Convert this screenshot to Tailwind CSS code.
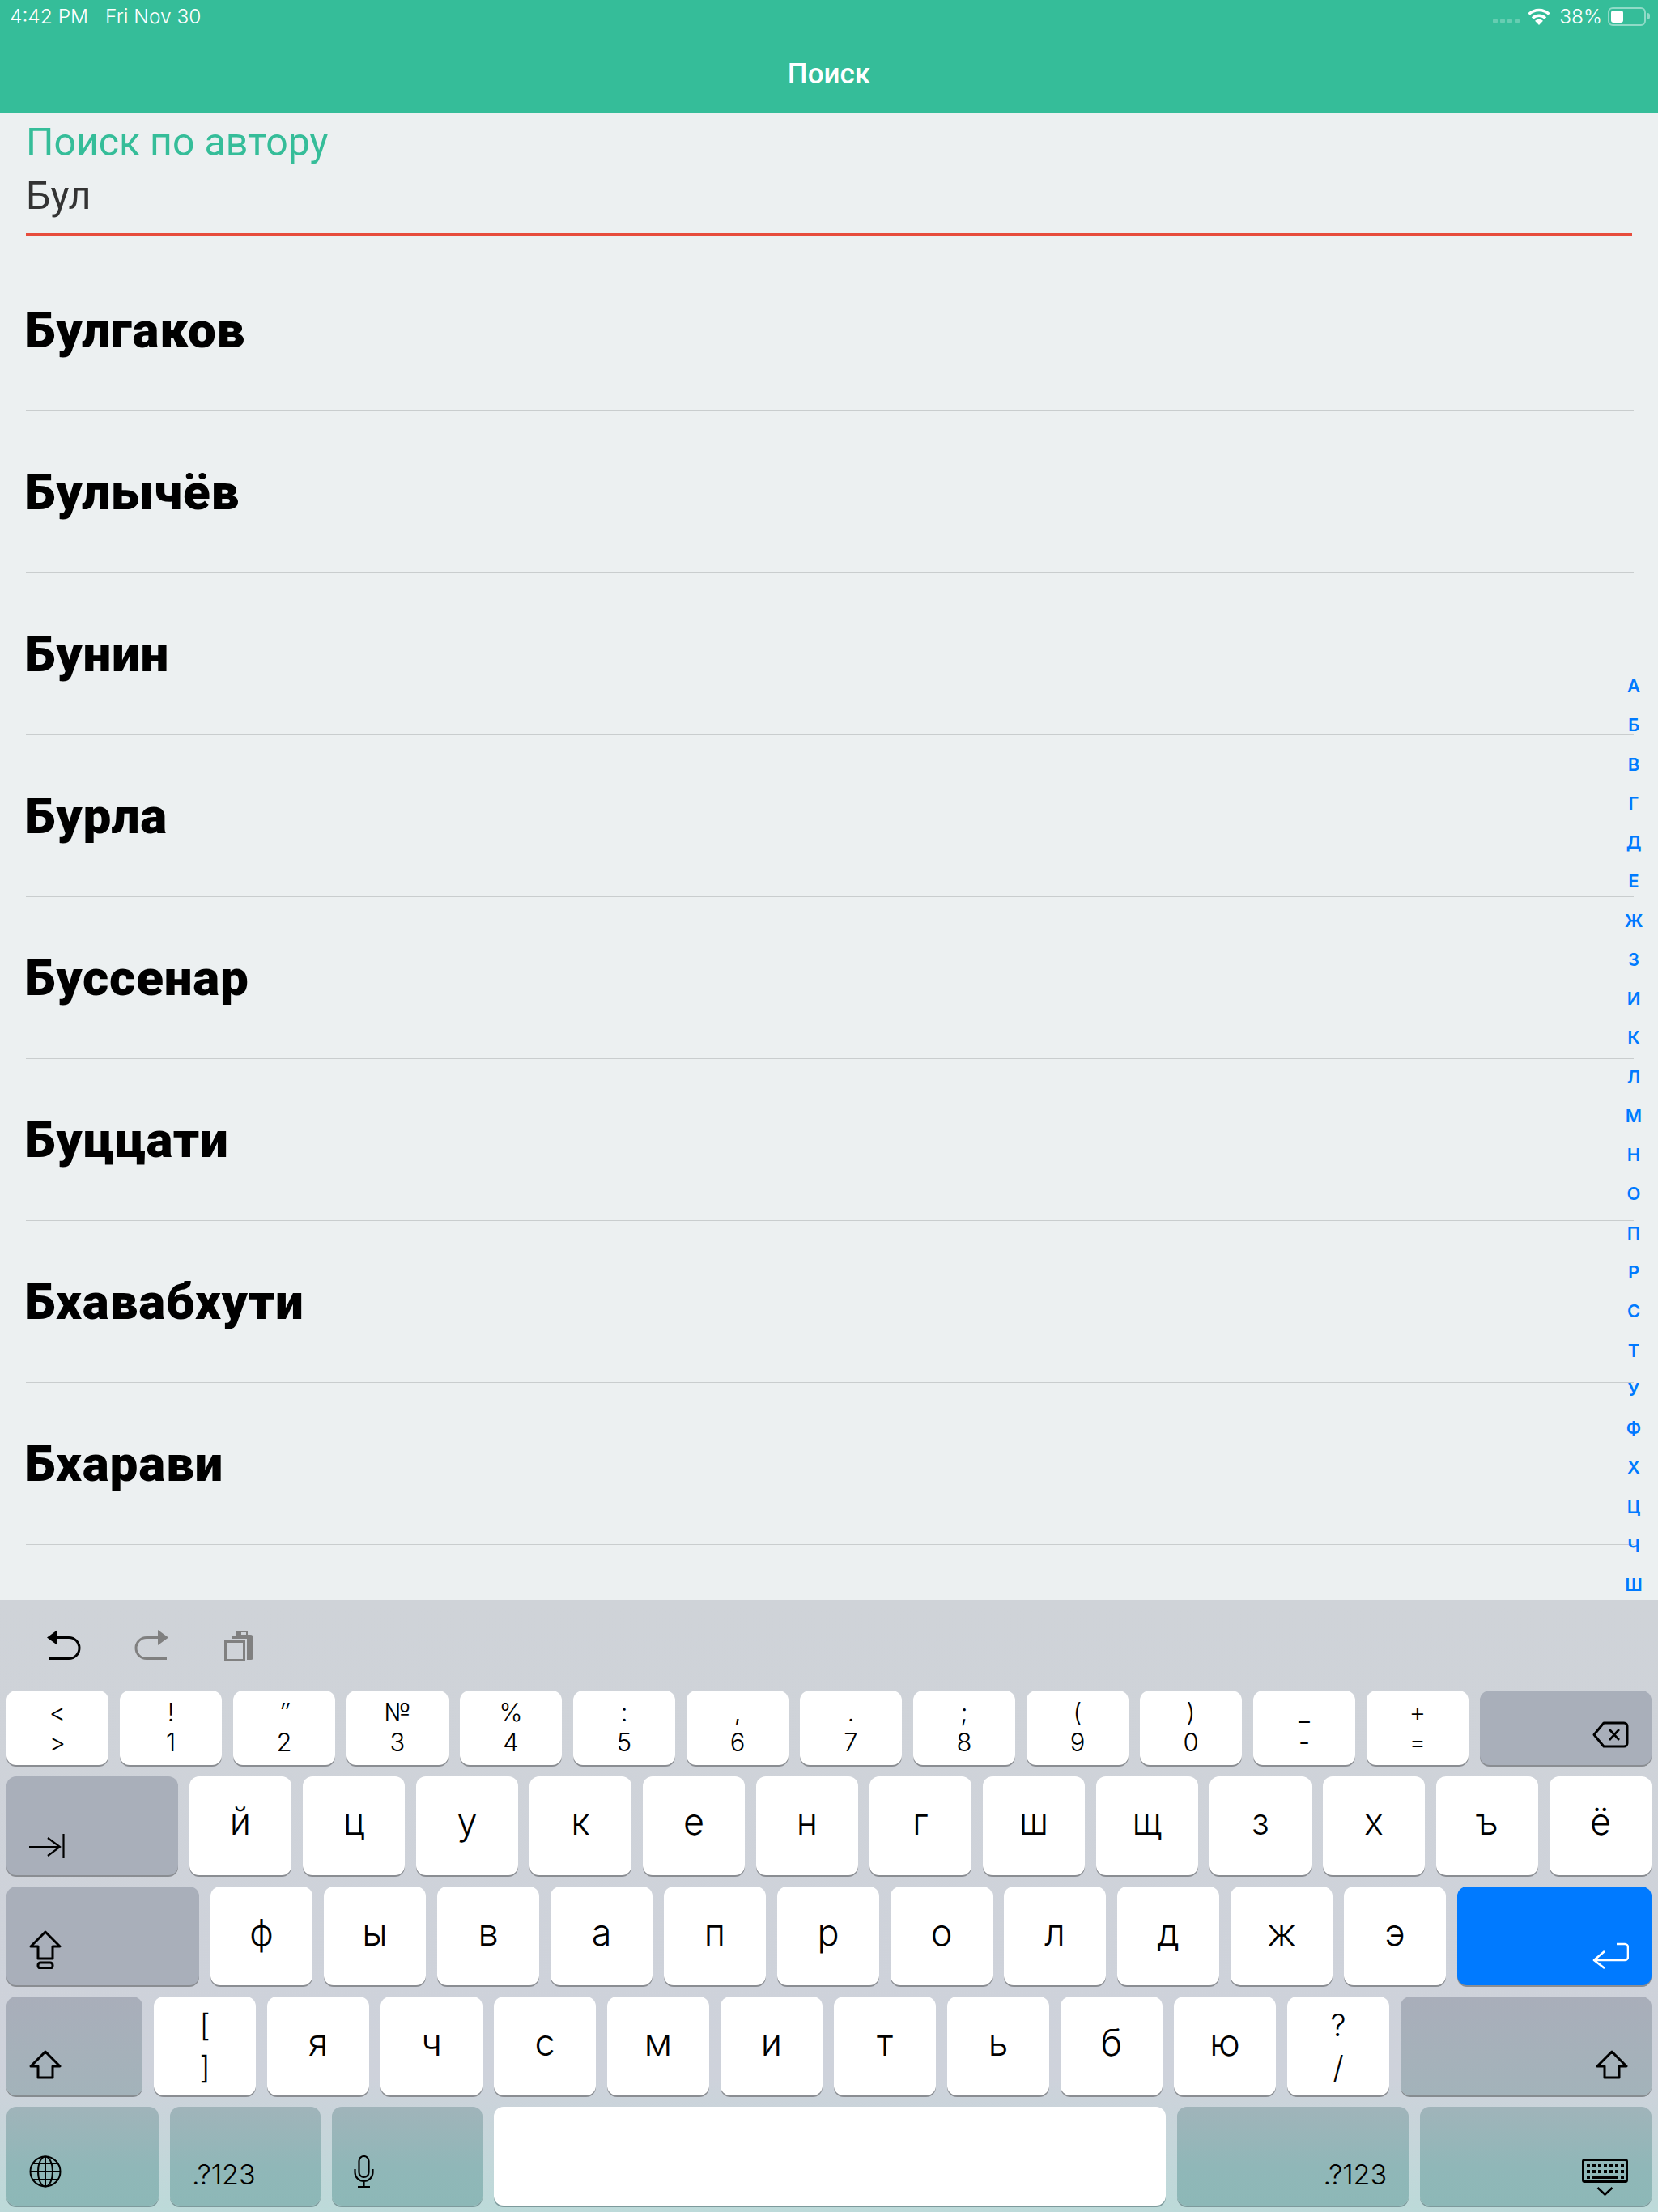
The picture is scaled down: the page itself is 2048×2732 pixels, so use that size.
<!DOCTYPE html>
<html lang="ru">
  <head>
    <meta charset="UTF-8" />
    <title>Поиск</title>
    <script src="https://cdn.jsdelivr.net/npm/@tailwindcss/browser@4"></script>
  </head>
  <body class="font-['Roboto',sans-serif]">
    <div class="relative w-[2048px] h-[2732px] flex flex-col overflow-hidden bg-[#ecf0f1]">
      <!-- Header -->
      <header class="h-[140px] shrink-0 bg-[#35bd99] text-white">
        <div class="h-[40px] pl-3 pr-[10px] flex items-center justify-between text-[24.500px] leading-none">
          <div class="flex gap-[21px] font-['Inter',sans-serif] font-light"><span>4:42 PM</span><span>Fri Nov 30</span></div>
          <div class="flex items-center font-['Inter',sans-serif] font-light">
            <div class="flex gap-[3px] mt-[12px] mr-[10px]">
              <span class="w-[6px] h-[6px] rounded-[2px] bg-white/25"></span>
              <span class="w-[6px] h-[6px] rounded-[2px] bg-white/25"></span>
              <span class="w-[6px] h-[6px] rounded-[2px] bg-white/25"></span>
              <span class="w-[6px] h-[6px] rounded-[2px] bg-white/25"></span>
            </div>
            <svg class="w-[28px] h-[21px]" viewBox="0 0 28 21" fill="none" stroke="white" stroke-width="3.4">
              <path d="M1.5 7.5a18 18 0 0 1 25 0" />
              <path d="M6 12.5a11.5 11.5 0 0 1 16 0" />
              <path d="M14 21l-5-5.2a7 7 0 0 1 10 0z" fill="white" stroke="none" />
            </svg>
            <span class="ml-[11px]">38%</span>
            <div class="ml-[7px] w-[47px] h-[23px] rounded-[6px] border-2 border-white/45 p-[2px]">
              <div class="w-[15px] h-full rounded-[3px] bg-white"></div>
            </div>
            <div class="ml-[2px] w-[3px] h-[8px] rounded-r-sm bg-white/45"></div>
          </div>
        </div>
        <h1 class="mt-[32px] text-center text-[35px] leading-[40px] font-medium">Поиск</h1>
      </header>

      <!-- Search + results -->
      <main class="flex-1 overflow-hidden">
        <div class="ml-8 w-[1984px] border-b-4 border-[#e74c3c] pt-2 h-[152px]">
          <div class="text-[48.250px] leading-[56px] text-[#35bd99]">Поиск по автору</div>
          <div class="mt-[10px] text-[48.500px] leading-[56px] text-[#333333]">Бул</div>
        </div>
        <ul class="mt-4 ml-8 w-[1986px] text-black text-[62px] font-black tracking-[0.8px]">
          <li class="h-[200px] flex items-center border-b border-[#c9cdce]"><span class="-ml-[2px]">Булгаков</span></li>
          <li class="h-[200px] flex items-center border-b border-[#c9cdce]"><span class="-ml-[2px]">Булычёв</span></li>
          <li class="h-[200px] flex items-center border-b border-[#c9cdce]"><span class="-ml-[2px]">Бунин</span></li>
          <li class="h-[200px] flex items-center border-b border-[#c9cdce]"><span class="-ml-[2px]">Бурла</span></li>
          <li class="h-[200px] flex items-center border-b border-[#c9cdce]"><span class="-ml-[2px]">Буссенар</span></li>
          <li class="h-[200px] flex items-center border-b border-[#c9cdce]"><span class="-ml-[2px]">Буццати</span></li>
          <li class="h-[200px] flex items-center border-b border-[#c9cdce]"><span class="-ml-[2px]">Бхавабхути</span></li>
          <li class="h-[200px] flex items-center border-b border-[#c9cdce]"><span class="-ml-[2px]">Бхарави</span></li>
        </ul>
      </main>

      <!-- Alphabet index, lies over the list -->
      <div class="absolute top-[823px] left-[1998px] w-10 flex flex-col items-center text-[22px] leading-[48.26px] font-['Inter',sans-serif] font-semibold text-[#007aff]">
        <span>А</span><span>Б</span><span>В</span><span>Г</span><span>Д</span><span>Е</span><span>Ж</span><span>З</span>
        <span>И</span><span>К</span><span>Л</span><span>М</span><span>Н</span><span>О</span><span>П</span><span>Р</span>
        <span>С</span><span>Т</span><span>У</span><span>Ф</span><span>Х</span><span>Ц</span><span>Ч</span><span>Ш</span>
      </div>

      <!-- Keyboard -->
      <section class="h-[756px] shrink-0 px-2 bg-linear-to-b from-[#cfd3d8] via-[#ced2db] via-78% to-[#bcdad9] font-['Inter',sans-serif] font-light text-black">
        <div class="h-[112px] pl-[50px] flex items-center">
          <svg class="w-[42px] h-[38px]" viewBox="0 0 42 38" fill="none" stroke="black" stroke-width="3">
            <path d="M0 9.5L13 0V19Z" fill="black" stroke="none" />
            <path d="M12 9.5H27a13 13 0 0 1 0 26H2" />
          </svg>
          <svg class="ml-[66px] w-[42px] h-[38px]" viewBox="0 0 42 38" fill="none" stroke="#808080" stroke-width="3">
            <path d="M42 9.5L29 0V19Z" fill="#808080" stroke="none" />
            <path d="M30 9.5H15a13 13 0 0 0 0 26H40" />
          </svg>
          <svg class="ml-[69px] w-[37px] h-[39px]" viewBox="0 0 37 39" fill="none">
            <path d="M9 7h6V1h14v5h3a4 4 0 0 1 4 4v24a3 3 0 0 1-3 3h-5V11H9Z" fill="#808080" />
            <rect x="21" y="3" width="6" height="3" fill="#cfd3d8" />
            <rect x="1.5" y="14.5" width="23" height="23" stroke="#808080" stroke-width="3" />
          </svg>
        </div>

        <div class="flex flex-col gap-[14px]">
          <!-- Row 1 -->
          <div class="h-[92px] flex gap-[14px] text-[31px] leading-[37px] text-center">
            <div class="w-[126px] rounded-[12px] bg-white shadow-[0_2px_0_#8a8d92] pt-[8px]">&lt;<br />&gt;</div>
            <div class="w-[126px] rounded-[12px] bg-white shadow-[0_2px_0_#8a8d92] pt-[8px]">!<br />1</div>
            <div class="w-[126px] rounded-[12px] bg-white shadow-[0_2px_0_#8a8d92] pt-[8px]"><i>″</i><br />2</div>
            <div class="w-[126px] rounded-[12px] bg-white shadow-[0_2px_0_#8a8d92] pt-[8px]">№<br />3</div>
            <div class="w-[126px] rounded-[12px] bg-white shadow-[0_2px_0_#8a8d92] pt-[8px]">%<br />4</div>
            <div class="w-[126px] rounded-[12px] bg-white shadow-[0_2px_0_#8a8d92] pt-[8px]">:<br />5</div>
            <div class="w-[126px] rounded-[12px] bg-white shadow-[0_2px_0_#8a8d92] pt-[8px]">,<br />6</div>
            <div class="w-[126px] rounded-[12px] bg-white shadow-[0_2px_0_#8a8d92] pt-[8px]">.<br />7</div>
            <div class="w-[126px] rounded-[12px] bg-white shadow-[0_2px_0_#8a8d92] pt-[8px]">;<br />8</div>
            <div class="w-[126px] rounded-[12px] bg-white shadow-[0_2px_0_#8a8d92] pt-[8px]">(<br />9</div>
            <div class="w-[126px] rounded-[12px] bg-white shadow-[0_2px_0_#8a8d92] pt-[8px]">)<br />0</div>
            <div class="w-[126px] rounded-[12px] bg-white shadow-[0_2px_0_#8a8d92] pt-[8px]">_<br />-</div>
            <div class="w-[126px] rounded-[12px] bg-white shadow-[0_2px_0_#8a8d92] pt-[8px]">+<br />=</div>
            <div class="w-[212px] rounded-[12px] bg-[#a9afba] shadow-[0_2px_0_#8a8d92] flex items-end justify-end pr-[28px] pb-[21px]">
              <svg class="w-[45px] h-[33px]" viewBox="0 0 45 33" fill="none" stroke="black" stroke-width="3" stroke-linejoin="round">
                <path d="M14 2H39a4 4 0 0 1 4 4V27a4 4 0 0 1-4 4H14L2 16.5Z" />
                <path d="M21 10l12 13M33 10L21 23" stroke-width="2.6" />
              </svg>
            </div>
          </div>
          <!-- Row 2 -->
          <div class="h-[122px] flex gap-[14px] text-[45px]">
            <div class="w-[212px] rounded-[12px] bg-[#a9afba] shadow-[0_2px_0_#8a8d92] flex items-end pl-[28px] pb-[21px]">
              <svg class="w-[44px] h-[30px]" viewBox="0 0 44 30" fill="none" stroke="black" stroke-width="2.2">
                <path d="M0 16H38M23 5l15 11-15 11M42.500 0V30" />
              </svg>
            </div>
            <div class="w-[126px] rounded-[12px] bg-white shadow-[0_2px_0_#8a8d92] flex items-center justify-center pb-[10px]">й</div>
            <div class="w-[126px] rounded-[12px] bg-white shadow-[0_2px_0_#8a8d92] flex items-center justify-center pb-[10px]">ц</div>
            <div class="w-[126px] rounded-[12px] bg-white shadow-[0_2px_0_#8a8d92] flex items-center justify-center pb-[10px]">у</div>
            <div class="w-[126px] rounded-[12px] bg-white shadow-[0_2px_0_#8a8d92] flex items-center justify-center pb-[10px]">к</div>
            <div class="w-[126px] rounded-[12px] bg-white shadow-[0_2px_0_#8a8d92] flex items-center justify-center pb-[10px]">е</div>
            <div class="w-[126px] rounded-[12px] bg-white shadow-[0_2px_0_#8a8d92] flex items-center justify-center pb-[10px]">н</div>
            <div class="w-[126px] rounded-[12px] bg-white shadow-[0_2px_0_#8a8d92] flex items-center justify-center pb-[10px]">г</div>
            <div class="w-[126px] rounded-[12px] bg-white shadow-[0_2px_0_#8a8d92] flex items-center justify-center pb-[10px]">ш</div>
            <div class="w-[126px] rounded-[12px] bg-white shadow-[0_2px_0_#8a8d92] flex items-center justify-center pb-[10px]">щ</div>
            <div class="w-[126px] rounded-[12px] bg-white shadow-[0_2px_0_#8a8d92] flex items-center justify-center pb-[10px]">з</div>
            <div class="w-[126px] rounded-[12px] bg-white shadow-[0_2px_0_#8a8d92] flex items-center justify-center pb-[10px]">х</div>
            <div class="w-[126px] rounded-[12px] bg-white shadow-[0_2px_0_#8a8d92] flex items-center justify-center pb-[10px]">ъ</div>
            <div class="w-[126px] rounded-[12px] bg-white shadow-[0_2px_0_#8a8d92] flex items-center justify-center pb-[10px]">ё</div>
          </div>
          <!-- Row 3 -->
          <div class="h-[122px] flex gap-[14px] text-[45px]">
            <div class="w-[238px] rounded-[12px] bg-[#a9afba] shadow-[0_2px_0_#8a8d92] flex items-end pl-[28px] pb-[20px]">
              <svg class="w-[40px] h-[48px]" viewBox="0 0 40 48" fill="none" stroke="black" stroke-width="3" stroke-linejoin="round">
                <path d="M20 2L38 20H29V35H11V20H2Z" />
                <rect x="11" y="40" width="18" height="7" rx="3" />
              </svg>
            </div>
            <div class="w-[126px] rounded-[12px] bg-white shadow-[0_2px_0_#8a8d92] flex items-center justify-center pb-[8px]">ф</div>
            <div class="w-[126px] rounded-[12px] bg-white shadow-[0_2px_0_#8a8d92] flex items-center justify-center pb-[8px]">ы</div>
            <div class="w-[126px] rounded-[12px] bg-white shadow-[0_2px_0_#8a8d92] flex items-center justify-center pb-[8px]">в</div>
            <div class="w-[126px] rounded-[12px] bg-white shadow-[0_2px_0_#8a8d92] flex items-center justify-center pb-[8px]">а</div>
            <div class="w-[126px] rounded-[12px] bg-white shadow-[0_2px_0_#8a8d92] flex items-center justify-center pb-[8px]">п</div>
            <div class="w-[126px] rounded-[12px] bg-white shadow-[0_2px_0_#8a8d92] flex items-center justify-center pb-[8px]">р</div>
            <div class="w-[126px] rounded-[12px] bg-white shadow-[0_2px_0_#8a8d92] flex items-center justify-center pb-[8px]">о</div>
            <div class="w-[126px] rounded-[12px] bg-white shadow-[0_2px_0_#8a8d92] flex items-center justify-center pb-[8px]">л</div>
            <div class="w-[126px] rounded-[12px] bg-white shadow-[0_2px_0_#8a8d92] flex items-center justify-center pb-[8px]">д</div>
            <div class="w-[126px] rounded-[12px] bg-white shadow-[0_2px_0_#8a8d92] flex items-center justify-center pb-[8px]">ж</div>
            <div class="w-[126px] rounded-[12px] bg-white shadow-[0_2px_0_#8a8d92] flex items-center justify-center pb-[8px]">э</div>
            <div class="w-[240px] rounded-[12px] bg-[#007aff] shadow-[0_2px_0_#8a8d92] flex items-end justify-end pr-[28px] pb-[20px]">
              <svg class="w-[45px] h-[33px]" viewBox="0 0 45 33" fill="none" stroke="white" stroke-width="2.6" stroke-linejoin="round">
                <path d="M30 2H40a4 4 0 0 1 4 4V18a4 4 0 0 1-4 4H2M15 11L2 22 15 32" />
              </svg>
            </div>
          </div>
          <!-- Row 4 -->
          <div class="h-[122px] flex gap-[14px] text-[45px]">
            <div class="w-[168px] rounded-[12px] bg-linear-to-b from-[#a9aeba] to-[#a3b3ba] shadow-[0_2px_0_#868c90] flex items-end pl-[28px] pb-[20px]">
              <svg class="w-[40px] h-[36px]" viewBox="0 0 40 36" fill="none" stroke="black" stroke-width="3" stroke-linejoin="round">
                <path d="M20 2L38 20H29V34H11V20H2Z" />
              </svg>
            </div>
            <div class="w-[126px] rounded-[12px] bg-white shadow-[0_2px_0_#8a8d92] flex flex-col items-center justify-center text-[38px] leading-[52px]"><span>[</span><span>]</span></div>
            <div class="w-[126px] rounded-[12px] bg-white shadow-[0_2px_0_#8a8d92] flex items-center justify-center pb-[8px]">я</div>
            <div class="w-[126px] rounded-[12px] bg-white shadow-[0_2px_0_#8a8d92] flex items-center justify-center pb-[8px]">ч</div>
            <div class="w-[126px] rounded-[12px] bg-white shadow-[0_2px_0_#8a8d92] flex items-center justify-center pb-[8px]">с</div>
            <div class="w-[126px] rounded-[12px] bg-white shadow-[0_2px_0_#8a8d92] flex items-center justify-center pb-[8px]">м</div>
            <div class="w-[126px] rounded-[12px] bg-white shadow-[0_2px_0_#8a8d92] flex items-center justify-center pb-[8px]">и</div>
            <div class="w-[126px] rounded-[12px] bg-white shadow-[0_2px_0_#8a8d92] flex items-center justify-center pb-[8px]">т</div>
            <div class="w-[126px] rounded-[12px] bg-white shadow-[0_2px_0_#8a8d92] flex items-center justify-center pb-[8px]">ь</div>
            <div class="w-[126px] rounded-[12px] bg-white shadow-[0_2px_0_#8a8d92] flex items-center justify-center pb-[8px]">б</div>
            <div class="w-[126px] rounded-[12px] bg-white shadow-[0_2px_0_#8a8d92] flex items-center justify-center pb-[8px]">ю</div>
            <div class="w-[126px] rounded-[12px] bg-white shadow-[0_2px_0_#8a8d92] flex flex-col items-center justify-center text-[38px] leading-[52px]"><span>?</span><span>/</span></div>
            <div class="w-[310px] rounded-[12px] bg-linear-to-b from-[#a9aeba] to-[#a3b3ba] shadow-[0_2px_0_#868c90] flex items-end justify-end pr-[29px] pb-[20px]">
              <svg class="w-[40px] h-[36px]" viewBox="0 0 40 36" fill="none" stroke="black" stroke-width="3" stroke-linejoin="round">
                <path d="M20 2L38 20H29V34H11V20H2Z" />
              </svg>
            </div>
          </div>
          <!-- Row 5 -->
          <div class="h-[122px] flex gap-[14px] text-[34px] leading-[32px]">
            <div class="w-[188px] rounded-[12px] bg-linear-to-b from-[#a0b4ba] via-[#90b7b8] via-60% to-[#8db8b7] shadow-[0_2px_0_#7d9a9c] flex items-end pl-[28px] pb-[22px]">
              <svg class="w-[40px] h-[40px]" viewBox="0 0 40 40" fill="none" stroke="black" stroke-width="2">
                <circle cx="20" cy="20" r="18.500" />
                <ellipse cx="20" cy="20" rx="9" ry="18.500" />
                <path d="M20 1.500V38.500M1.500 20H38.500M4.500 10H35.500M4.500 30H35.500" />
              </svg>
            </div>
            <div class="w-[186px] rounded-[12px] bg-linear-to-b from-[#a0b4ba] via-[#90b7b8] via-60% to-[#8db8b7] shadow-[0_2px_0_#7d9a9c] flex items-end pl-[27px] pb-[22px]">.?123</div>
            <div class="w-[186px] rounded-[12px] bg-linear-to-b from-[#a0b4ba] via-[#90b7b8] via-60% to-[#8db8b7] shadow-[0_2px_0_#7d9a9c] flex items-end pl-[27px] pb-[22px]">
              <svg class="w-[25px] h-[40px]" viewBox="0 0 25 40" fill="none" stroke="black" stroke-width="2.2">
                <rect x="6.500" y="1" width="12" height="26" rx="6" />
                <path d="M1.500 17V21a11 11 0 0 0 22 0V17M12.500 32V39M5 39H20" />
              </svg>
            </div>
            <div class="w-[830px] rounded-[12px] bg-white shadow-[0_2px_0_#7d9a9c]"></div>
            <div class="w-[286px] rounded-[12px] bg-linear-to-b from-[#a0b4ba] via-[#90b7b8] via-60% to-[#8db8b7] shadow-[0_2px_0_#7d9a9c] flex items-end justify-end pr-[27px] pb-[22px]">.?123</div>
            <div class="w-[286px] rounded-[12px] bg-linear-to-b from-[#a0b4ba] via-[#90b7b8] via-60% to-[#8db8b7] shadow-[0_2px_0_#7d9a9c] flex items-end justify-end pr-[29px] pb-[12px]">
              <svg class="w-[57px] h-[46px]" viewBox="0 0 57 46" fill="none">
                <rect x="1.500" y="1.500" width="54" height="27" rx="2" stroke="black" stroke-width="3" />
                <path d="M6 7h4v4H6zM13 7h4v4h-4zM20 7h4v4h-4zM27 7h4v4h-4zM34 7h4v4h-4zM41 7h4v4h-4zM48 7h4v4h-4zM6 14h4v4H6zM13 14h4v4h-4zM20 14h4v4h-4zM27 14h4v4h-4zM34 14h4v4h-4zM41 14h4v4h-4zM48 14h4v4h-4zM6 21h4v4H6zM13 21h31v4H13zM48 21h4v4h-4z" fill="black" />
                <path d="M19.500 36l9 8.500 9-8.500" stroke="black" stroke-width="2.600" />
              </svg>
            </div>
          </div>
        </div>
      </section>
    </div>
  </body>
</html>
